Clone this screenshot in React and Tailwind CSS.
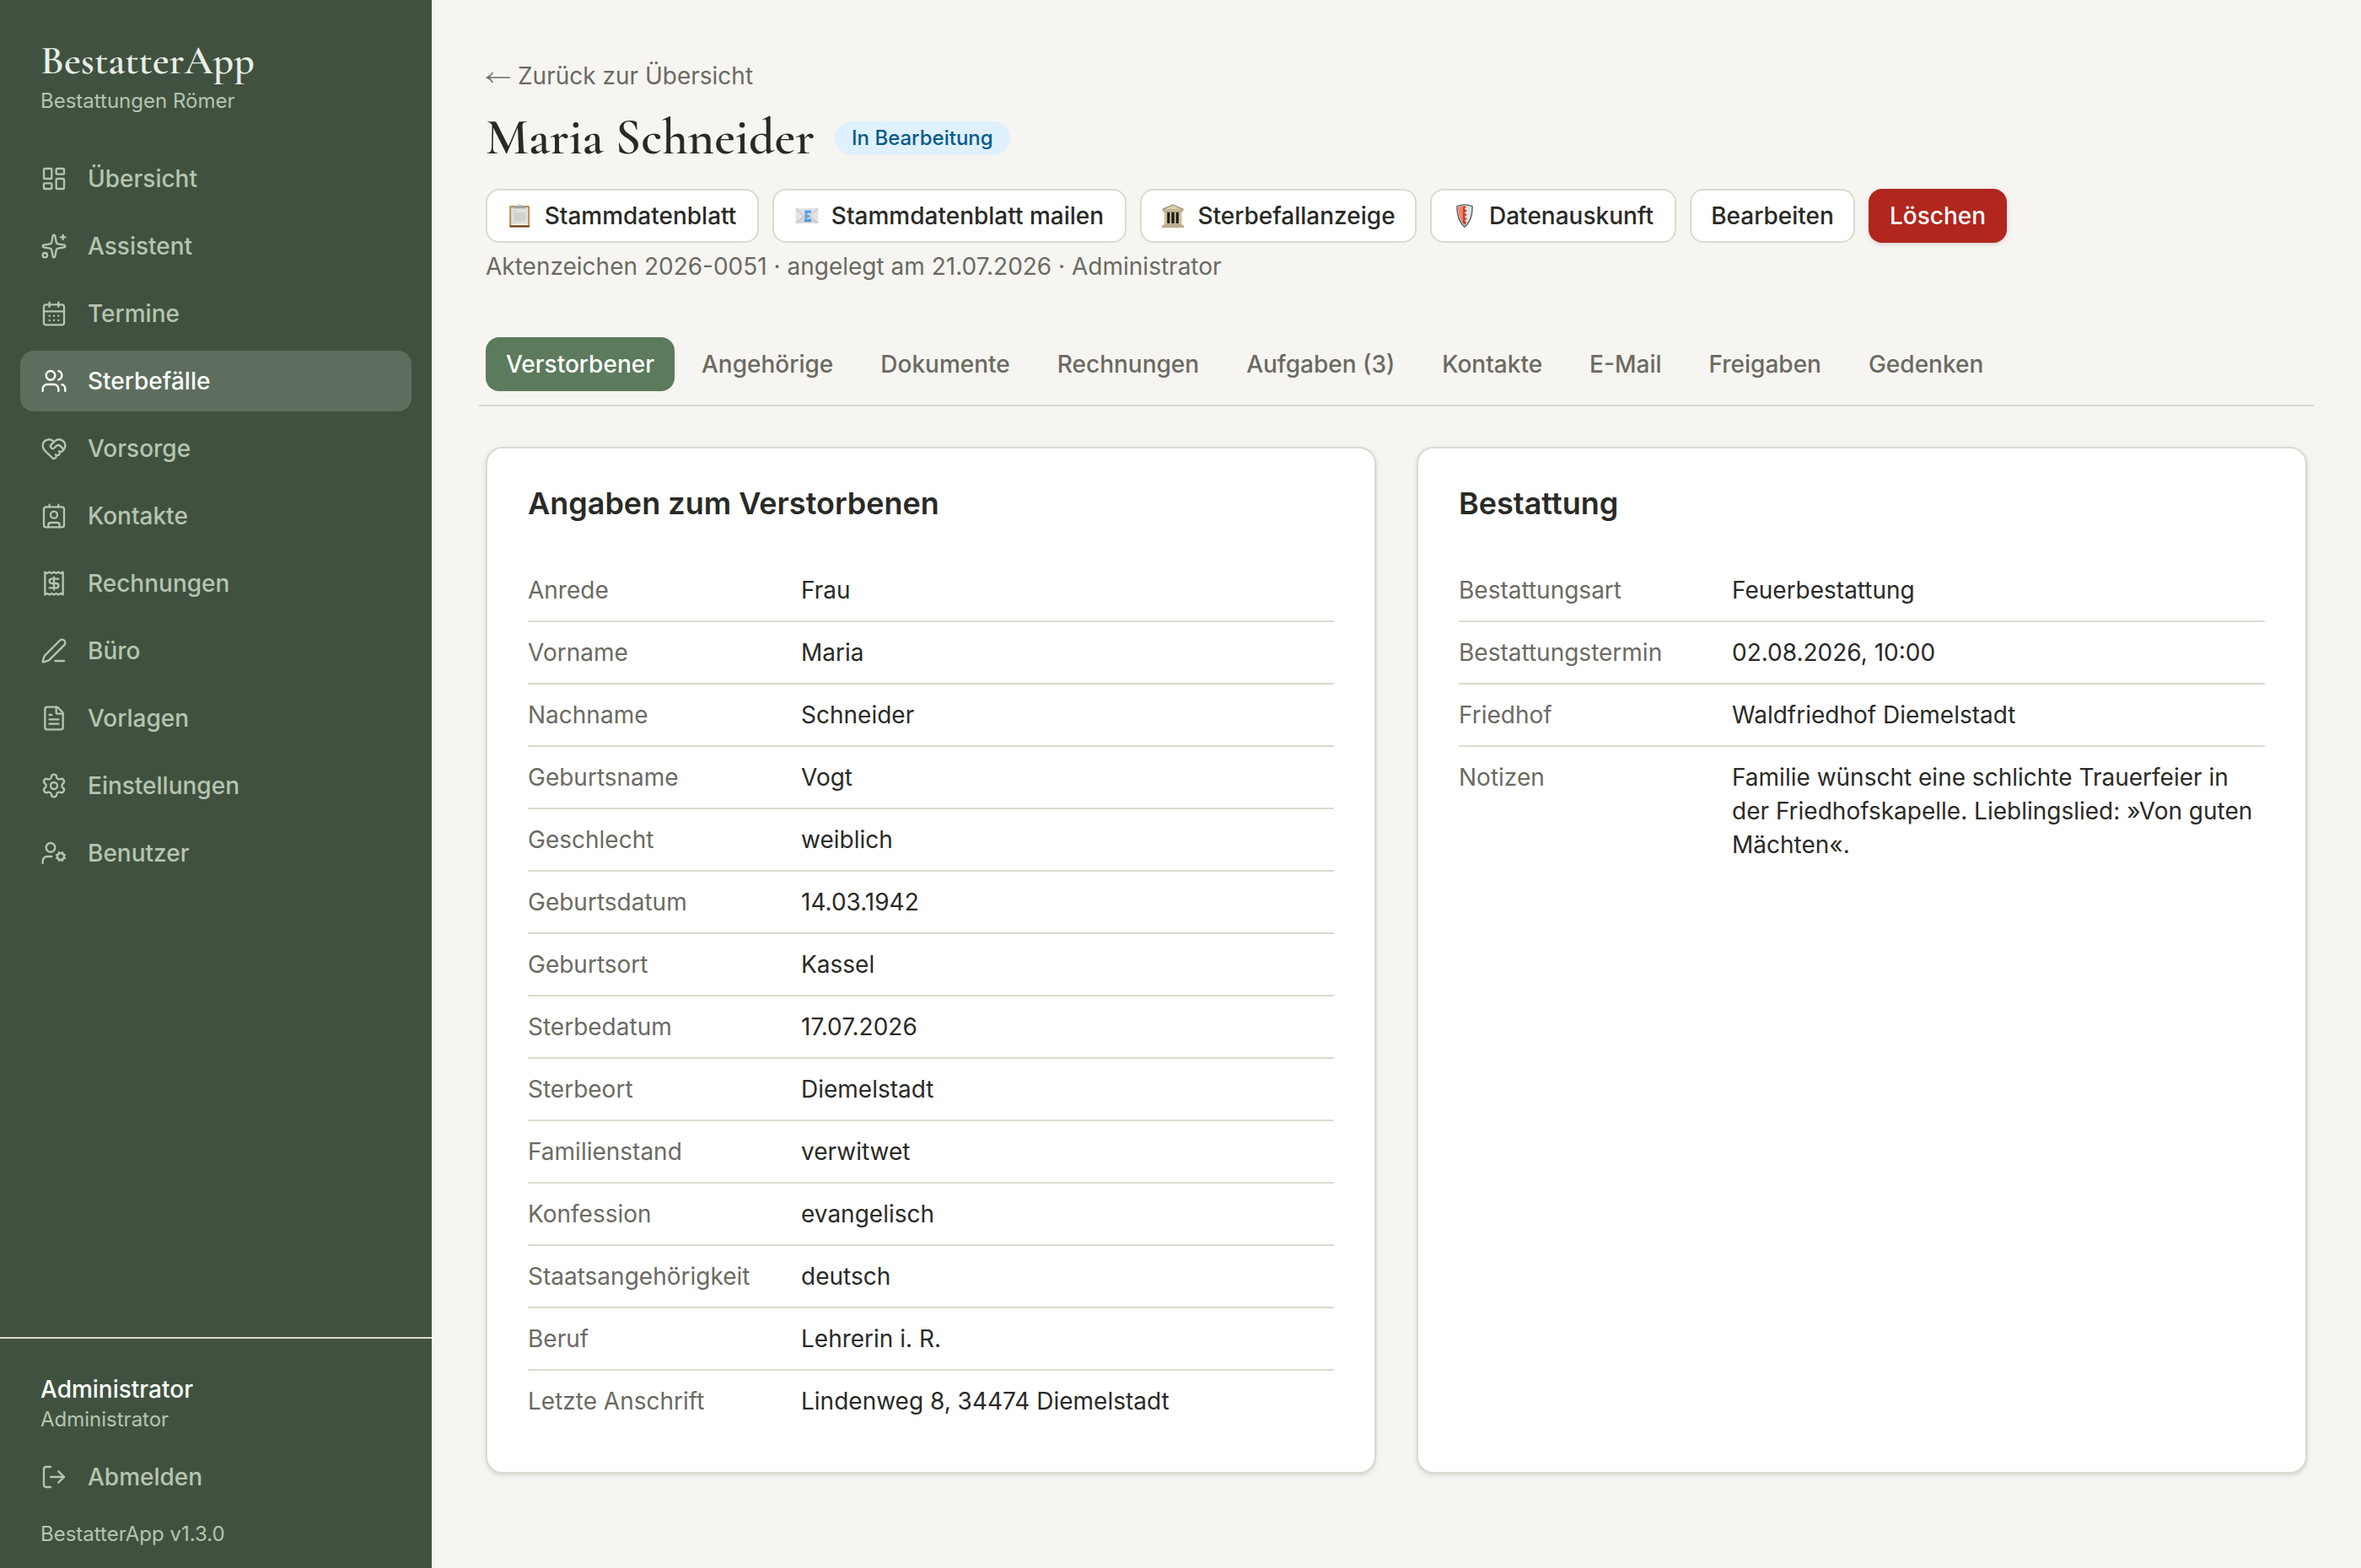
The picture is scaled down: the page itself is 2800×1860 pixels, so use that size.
import React from "react";
import {
  LayoutDashboard, Sparkles, CalendarDays, Users, HeartHandshake, Contact, Receipt,
  PenLine, FileText, Settings, UserCog, LogOut,
} from "lucide-react";

const nav = [
  { label: "Übersicht", icon: LayoutDashboard },
  { label: "Assistent", icon: Sparkles },
  { label: "Termine", icon: CalendarDays },
  { label: "Sterbefälle", icon: Users, active: true },
  { label: "Vorsorge", icon: HeartHandshake },
  { label: "Kontakte", icon: Contact },
  { label: "Rechnungen", icon: Receipt },
  { label: "Büro", icon: PenLine },
  { label: "Vorlagen", icon: FileText },
  { label: "Einstellungen", icon: Settings },
  { label: "Benutzer", icon: UserCog },
];

const person = [
  ["Anrede", "Frau"], ["Vorname", "Maria"], ["Nachname", "Schneider"], ["Geburtsname", "Vogt"],
  ["Geschlecht", "weiblich"], ["Geburtsdatum", "14.03.1942"], ["Geburtsort", "Kassel"],
  ["Sterbedatum", "17.07.2026"], ["Sterbeort", "Diemelstadt"], ["Familienstand", "verwitwet"],
  ["Konfession", "evangelisch"], ["Staatsangehörigkeit", "deutsch"], ["Beruf", "Lehrerin i. R."],
  ["Letzte Anschrift", "Lindenweg 8, 34474 Diemelstadt"],
];

const funeral = [
  ["Bestattungsart", "Feuerbestattung"],
  ["Bestattungstermin", "02.08.2026, 10:00"],
  ["Friedhof", "Waldfriedhof Diemelstadt"],
  ["Notizen", "Familie wünscht eine schlichte Trauerfeier in der Friedhofskapelle. Lieblingslied: »Von guten Mächten«."],
];

const tabs = ["Verstorbener", "Angehörige", "Dokumente", "Rechnungen", "Aufgaben (3)", "Kontakte", "E-Mail", "Freigaben", "Gedenken"];

function Clipboard() {
  return (
    <svg viewBox="0.8 0 28 28" className="size-7 shrink-0">
      <rect x="2" y="2" width="24" height="25.5" rx="1.5" fill="#bf8b4c" />
      <rect x="2" y="25.500" width="24" height="2" rx="1" fill="#6b4522" />
      <rect x="4" y="4" width="20" height="21" fill="#e0e0df" />
      <path d="M4 25 24 25 24 23.500 4 24.300z" fill="#fafafa" />
      <rect x="7" y="10" width="14" height="10.500" fill="#d0d0d0" />
      <path d="M6 8h5M6 22h4" stroke="#c8c8c8" strokeWidth="1" />
      <path d="M6 5.200V3h4.500l1.500-1.800h4L17.500 3H22v2.200z" fill="#a0a5aa" />
      <circle cx="14" cy="1.600" r="1.100" fill="#e8f0f5" stroke="#a9b6c0" strokeWidth=".7" />
    </svg>
  );
}

function Mail() {
  return (
    <svg viewBox="0 0 28 28" className="size-7 shrink-0">
      <rect x="0.500" y="5" width="27" height="18" rx="1" fill="#e3e3e4" />
      <path d="M1 22.700 10.500 14h7l9.500 8.700z" fill="#d8d8da" />
      <path d="M1 5.500 11 14.200 1 22.500M27 5.500 17 14.200l10 8.300" fill="none" stroke="#b4b4b8" strokeWidth="1" />
      <path d="M17.800 10.600v-1.300h-6.300M13 9.300v10.400M11.200 19.700h6.500v-1.800M13 14.400h4" fill="none" stroke="#2f6aa8" strokeWidth="2.400" />
      <path d="M17.800 10v-1.300h-6.300M13 8.700v10.400M11.200 19.100h6.300v-1.800M13 13.800h4" fill="none" stroke="#58a4f2" strokeWidth="2.300" />
    </svg>
  );
}

function Temple() {
  return (
    <svg viewBox="0 0 28 28" className="size-7 shrink-0">
      <path d="M14 .3 26.500 5.500V7.500L24.500 9.800h-21L1.500 7.500v-2z" fill="#a99e7c" />
      <path d="M14 1.800 23.500 6h-19z" fill="#dbd2b0" />
      <path d="M3.500 7.500h21" stroke="#d6ccaa" strokeWidth="1.400" />
      <rect x="4" y="9.800" width="20" height="14" fill="#1f1a10" />
      <path d="M5.400 9.500v14M22.600 9.500v14" stroke="#cbc19f" strokeWidth="3.600" />
      <path d="M11.300 9.500v14M16.700 9.500v14" stroke="#cbc19f" strokeWidth="2" />
      <path d="M3.500 23h21v2H27v2.800H1V25h2.500z" fill="#c9be9b" />
      <path d="M1 27.300h26M3.500 24.900h21" stroke="#9d9270" strokeWidth=".9" />
    </svg>
  );
}

function Shield() {
  return (
    <svg viewBox="0 0 28 28" className="size-7 shrink-0">
      <path d="M14 .9c3.300 0 6.400.7 9 1.800.3 11-2 18.500-9 24.500C7 21.200 4.700 13.700 5 2.700 7.600 1.600 10.700.9 14 .9z" fill="#e2e5e8" stroke="#595b5e" strokeWidth="1.400" />
      <path d="M14 2.500c-2.700 0-5.200.5-7.300 1.300 0 9.500 1.800 15.800 7.300 21.300l2.500-3.500L13.800 20l3-2.500-3-2.300 3-2.500-3-2.300 3-2.500-3-2.300 2.500-2.500z" fill="#c9402c" />
      <path d="M12 2.700c-1.900.1-3.700.5-5.300 1.100.100 7.800 1.300 13.700 5.300 18.500z" fill="#f4806c" />
    </svg>
  );
}

const actions = [
  { label: "Stammdatenblatt", icon: Clipboard, width: "w-[324px]" },
  { label: "Stammdatenblatt mailen", icon: Mail, width: "w-[420px]" },
  { label: "Sterbefallanzeige", icon: Temple, width: "w-[328px]" },
  { label: "Datenauskunft", icon: Shield, width: "w-[292px]" },
  { label: "Bearbeiten", width: "w-[196px]" },
];

function Card({ title, rows }) {
  return (
    <section className="rounded-[20px] border-2 border-[#dcdace] bg-white p-12 shadow-[0_2px_6px_rgba(0,0,0,0.1),0_2px_4px_-2px_rgba(0,0,0,0.1)]">
      <h2 className="mt-[-4px] text-[36px] leading-[42px] font-semibold">{title}</h2>
      <dl className="mt-[46px] divide-y-2 divide-[#dcdace]">
        {rows.map(([k, v]) => (
          <div key={k} className="grid grid-cols-[292px_1fr] gap-8 py-4 leading-10">
            <dt className="text-[#6b6a62]">{k}</dt>
            <dd>{v}</dd>
          </div>
        ))}
      </dl>
    </section>
  );
}

export default function App() {
  return (
    <div className="flex h-[1860px] w-[2800px] bg-[#f6f5f1] font-['Inter',sans-serif] text-[28px] leading-10 text-[#292a26]">
      <aside className="flex w-[512px] shrink-0 flex-col bg-[#40523f] text-[#b7c4b1]">
        <div className="px-12 pt-11">
          <div className="font-['Cormorant_Garamond','Liberation_Serif',serif] text-[48px] leading-[56px] font-semibold text-[#e9ede7]">BestatterApp</div>
          <div className="text-2xl leading-10">Bestattungen Römer</div>
        </div>
        <nav className="mt-9 flex flex-col gap-2 px-6">
          {nav.map(({ label, icon: Icon, active }) => (
            <a key={label} className={active ? "flex h-18 items-center gap-6 rounded-2xl bg-[#5d6e5e] px-6 font-medium text-white" : "flex h-18 items-center gap-6 px-6 font-medium"}>
              <Icon className="size-8" strokeWidth={1.75} />
              {label}
            </a>
          ))}
        </nav>
        <div className="mt-auto border-t-2 border-[#dcdace] px-12 pt-10 pb-5">
          <div className="font-medium text-white">Administrator</div>
          <div className="text-2xl leading-8">Administrator</div>
          <div className="mt-4 flex h-18 items-center gap-6 font-medium">
            <LogOut className="size-8" strokeWidth={1.75} />
            Abmelden
          </div>
          <div className="mt-3 text-2xl leading-10">BestatterApp v1.3.0</div>
        </div>
      </aside>
      <main className="flex-1 px-16 pt-[70px]">
        <div className="flex h-10 items-center gap-2 text-[#6b6a62]">
          <svg viewBox="0 0 30 20" className="mt-1 h-5 w-[30px]" fill="none" stroke="currentColor" strokeWidth="1.6" strokeLinecap="round">
            <path d="M2 10h26.500M8 4.500C6.500 7.500 4.500 9 1.500 10c3 1 5 2.500 6.500 5.500" />
          </svg>
          Zurück zur Übersicht
        </div>
        <div className="mt-[18px] flex h-18 items-center gap-6">
          <h1 className="-mt-0.5 w-[390px] font-['Cormorant_Garamond','Liberation_Serif',serif] text-[60px] leading-[72px] font-semibold whitespace-nowrap">Maria Schneider</h1>
          <span className="rounded-full bg-[#e0f1fe] px-5 py-1 text-2xl leading-8 font-medium text-[#075a8c]">In Bearbeitung</span>
        </div>
        <div className="mt-6 flex gap-4">
          {actions.map(({ label, icon: Icon, width }) => (
            <button key={label} className={`${width} flex h-16 items-center justify-center gap-[15px] rounded-2xl border-2 border-[#dcdace] bg-white font-medium whitespace-nowrap`}>
              {Icon && <Icon />}
              {label}
            </button>
          ))}
          <button className="h-16 w-[164px] rounded-2xl bg-[#b1261d] font-medium text-white shadow-[0_2px_6px_rgba(0,0,0,0.1),0_2px_4px_-2px_rgba(0,0,0,0.1)]">Löschen</button>
        </div>
        <div className="mt-2 text-[#6b6a62]">Aktenzeichen 2026-0051 · angelegt am 21.07.2026 · Administrator</div>
        <div className="-mx-2 mt-16 flex gap-2 border-b-2 border-[#dcdace] px-2 pb-4">
          {tabs.map((t, i) => (
            <a key={t} className={i === 0 ? "flex h-16 items-center rounded-2xl bg-[#5c7a5c] px-6 font-medium text-white" : "flex h-16 items-center px-6 font-medium text-[#6b6a62]"}>{t}</a>
          ))}
        </div>
        <div className="mt-12 grid grid-cols-2 gap-12">
          <Card title="Angaben zum Verstorbenen" rows={person} />
          <Card title="Bestattung" rows={funeral} />
        </div>
      </main>
    </div>
  );
}
